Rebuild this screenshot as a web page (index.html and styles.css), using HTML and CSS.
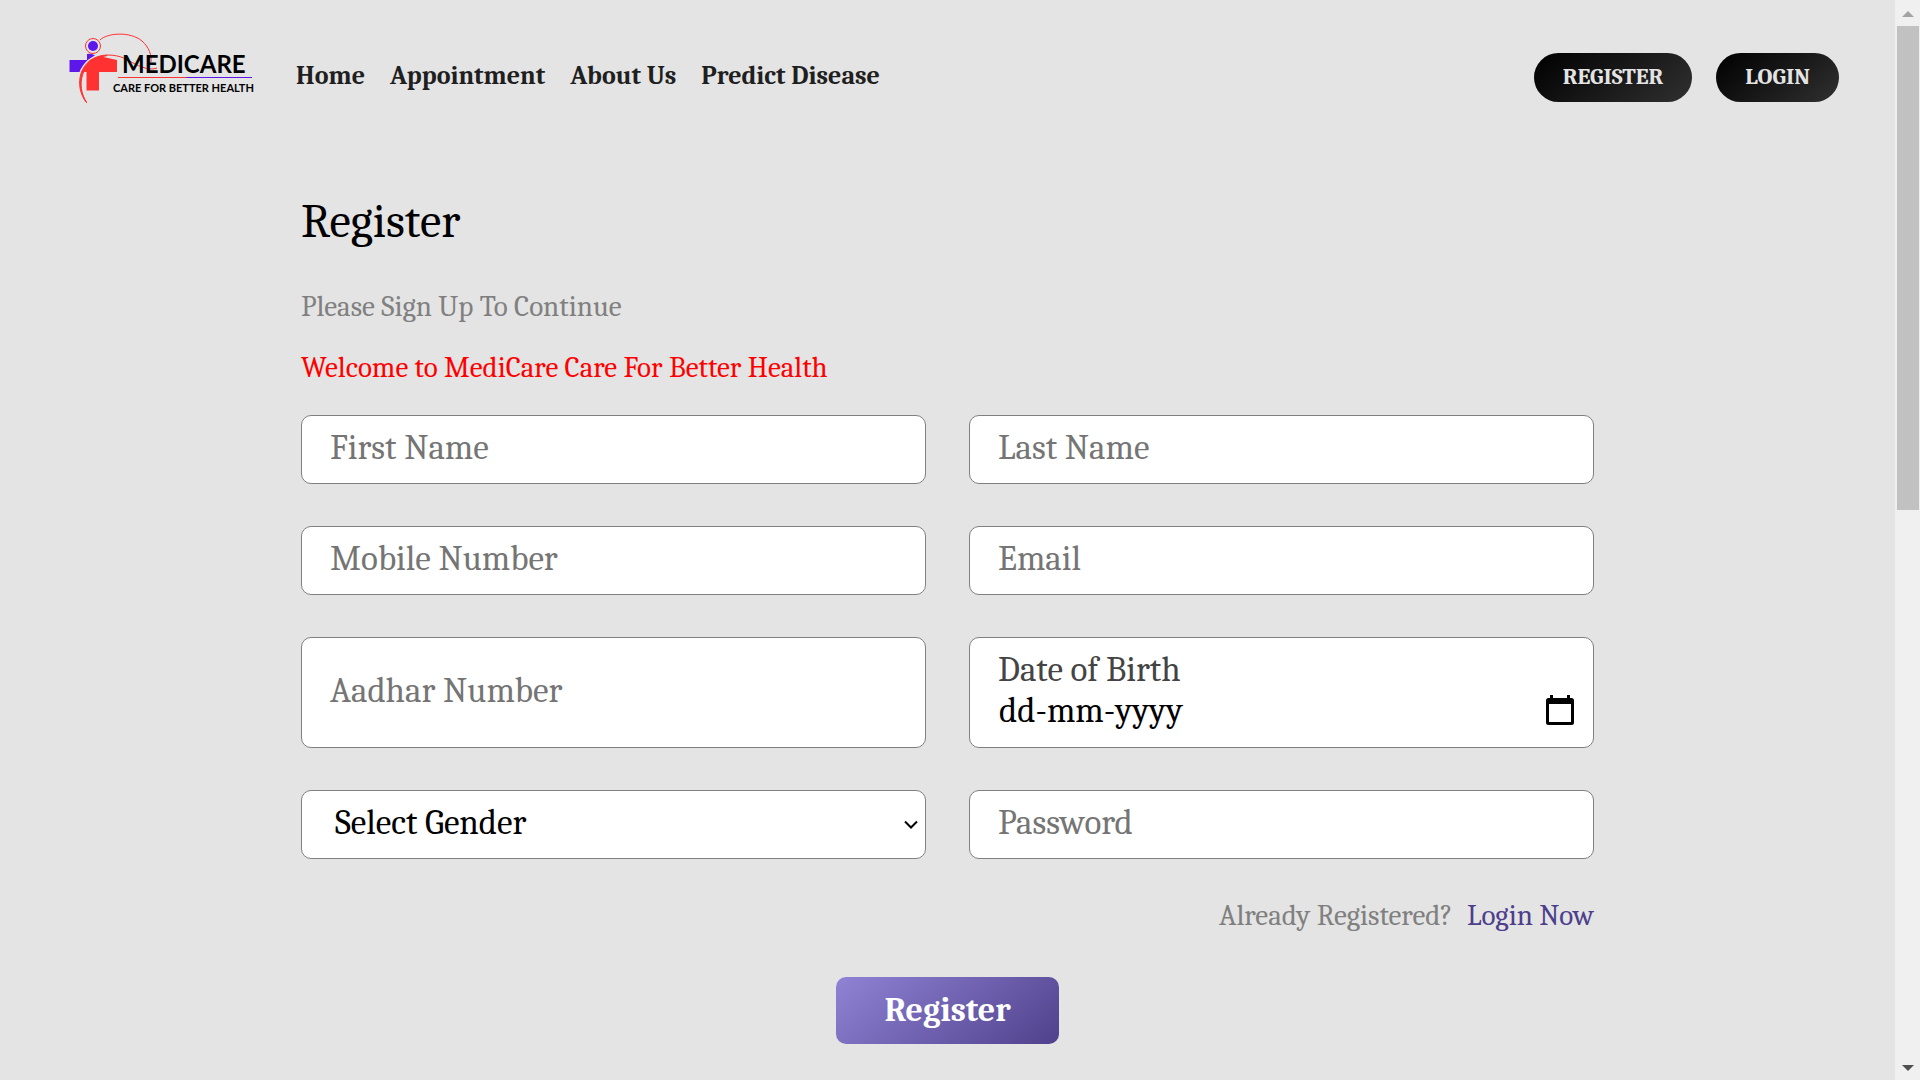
FILE: index.html
```html
<!DOCTYPE html>
<html lang="en">
<head>
<meta charset="utf-8">
<meta name="viewport" content="width=device-width, initial-scale=1">
<title>MediCare - Register</title>
<link rel="stylesheet" href="styles.css">
</head>
<body>
<div class="page">
  <header class="header">
    <a class="logo" href="#" aria-label="MediCare home">
      <svg width="188" height="72" viewBox="68 32 188 72" aria-hidden="true">
        <path d="M69.5 60H87V54q7-1 10 4v2h3v12H69.500z" fill="#5e17eb"/>
        <path d="M79 103C74 78 84 56 107 55c12 0 20 5 26 12" fill="none" stroke="#e4e4e4" stroke-width="4"/>
        <path d="M117 60V72H99V90.500H86.500V72H81L90 60l9-4z" fill="#ff3131"/>
        <path d="M86.500 102.500C73 86 79 56 107 55c15 0 20 5 28 9 10 5 17 6 22 4" fill="none" stroke="#ff3131" stroke-width="1"/>
        <path d="M86.500 102.500C76 86 80 60 107 55.500C82 57 73 82 86.500 102.500z" fill="#ff3131" stroke="#ff3131"/>
        <circle cx="93" cy="46" r="7.500" fill="#e4e4e4" stroke="#ff3131"/>
        <circle cx="93" cy="46" r="5" fill="#5e17eb"/>
        <path d="M100 40C107 33 130 31 142 41c7 6 10 15 9 21" fill="none" stroke="#ff3131" stroke-width="1"/>
        <text x="122" y="73" class="logo-name">MEDICARE</text>
        <path d="M118 77.500h68" stroke="#ff3131" stroke-width="1"/>
        <path d="M186 77.500h66" stroke="#5e17eb" stroke-width="1"/>
        <text x="113" y="92" class="logo-tag">CARE FOR BETTER HEALTH</text>
      </svg>
    </a>
    <nav class="nav">
      <a href="#">Home</a>
      <a href="#">Appointment</a>
      <a href="#">About Us</a>
      <a href="#">Predict Disease</a>
    </nav>
    <div class="actions">
      <button class="pill" type="button">REGISTER</button>
      <button class="pill" type="button">LOGIN</button>
    </div>
  </header>
  <main class="main">
    <h1>Register</h1>
    <p class="lead">Please Sign Up To Continue</p>
    <p class="lead welcome">Welcome to MediCare Care For Better Health</p>
    <form>
      <div class="fields">
        <input class="field" type="text" placeholder="First Name" aria-label="First Name">
        <input class="field" type="text" placeholder="Last Name" aria-label="Last Name">
        <input class="field" type="tel" placeholder="Mobile Number" aria-label="Mobile Number">
        <input class="field" type="email" placeholder="Email" aria-label="Email">
        <input class="field" type="text" placeholder="Aadhar Number" aria-label="Aadhar Number">
        <div class="field date">
          <label for="dob">Date of Birth</label>
          <div class="date-row">
            <input id="dob" type="text" placeholder="dd-mm-yyyy">
            <button class="picker" type="button" aria-label="Open calendar">
              <svg width="28" height="30" viewBox="0 0 28 30" aria-hidden="true">
                <path fill-rule="evenodd" d="M4 0h3v3h14V0h3v3h1.500a2.500 2.500 0 0 1 2.500 2.500v22a2.500 2.500 0 0 1-2.500 2.500h-23A2.500 2.500 0 0 1 0 27.500v-22A2.500 2.500 0 0 1 2.500 3H4zM3 9v18h22V9z"/>
              </svg>
            </button>
          </div>
        </div>
        <div class="select">
          <select class="field" aria-label="Gender">
            <option>Select Gender</option>
            <option>Male</option>
            <option>Female</option>
          </select>
          <svg class="chevron" width="14" height="10" viewBox="0 0 14 10" aria-hidden="true"><path d="M1 1.500l6 6 6-6" fill="none" stroke="#000" stroke-width="2"/></svg>
        </div>
        <input class="field" type="password" placeholder="Password" aria-label="Password">
      </div>
      <p class="signin">Already Registered? <a href="#">Login Now</a></p>
      <button class="submit" type="submit">Register</button>
    </form>
  </main>
</div>
<div class="scrollbar" aria-hidden="true">
  <svg width="12" height="6" viewBox="0 0 12 6"><path d="M0 6l6-6 6 6z" fill="#a3a3a3"/></svg>
  <div class="track"><div class="thumb"></div></div>
  <svg width="12" height="6" viewBox="0 0 12 6"><path d="M0 0h12L6 6z" fill="#505050"/></svg>
</div>
</body>
</html>
```
FILE: styles.css
```css
* { box-sizing: border-box; }
body {
  margin: 0;
  display: flex;
  min-height: 100vh;
  background: #e4e4e4;
  font-family: Caladea, Cambria, "Liberation Serif", serif;
}
input, select, button { font-family: inherit; }
.page { flex: 1; min-width: 0; }
.header {
  display: flex;
  align-items: center;
  padding: 32px 56px 0 68px;
}
.logo svg { display: block; }
.logo-name { font: 700 24px Lato, sans-serif; }
.logo-tag { font: 700 11px Lato, sans-serif; }
.nav { display: flex; gap: 25px; margin: 16px 0 0 40px; }
.nav a {
  color: #1f1f1f;
  font-size: 26px;
  font-weight: 600;
  line-height: 32px;
  text-decoration: none;
}
.actions { display: flex; gap: 24px; margin: 18px 0 0 auto; }
.pill {
  height: 49px;
  padding: 0 29px 2px;
  border: 0;
  border-radius: 25px;
  background: linear-gradient(140deg, #000, #303030);
  color: #e4e4e4;
  font-size: 23px;
  font-weight: 700;
}
.main { width: 100%; max-width: 1293px; margin: 0 auto; padding: 88px 0 36px; }
h1 { margin: 0; font-size: 48px; font-weight: 500; line-height: 60px; }
.lead { margin: 25px 0 0; color: #808080; font-size: 29px; line-height: 36px; }
h1 + .lead { margin-top: 37px; }
.lead.welcome { color: #f00; }
.fields {
  display: grid;
  grid-template-columns: 1fr 1fr;
  gap: 42px 43px;
  margin-top: 29px;
}
.field {
  width: 100%;
  min-height: 69px;
  padding: 0 28px 4px;
  border: 1px solid #808080;
  border-radius: 10px;
  background: #fff;
  color: #000;
  font-size: 35px;
  line-height: 40px;
}
.field::placeholder { color: #757575; }
.date { padding: 12px 19px 17px 28px; }
.date label { display: block; color: #444; }
.date-row { display: flex; align-items: center; }
.date input { flex: 1; min-width: 0; height: 40px; padding: 0 1px; border: 0; background: none; font-size: 35px; }
.date input::placeholder { color: #000; }
.picker { padding: 0; border: 0; background: none; }
.picker svg { display: block; }
.select { position: relative; }
.select select { display: block; appearance: none; padding-left: 33px; }
.chevron { position: absolute; right: 8px; top: 30px; pointer-events: none; }
.signin { margin: 39px 0 0; color: #808080; font-size: 29px; line-height: 36px; text-align: right; }
.signin a { margin-left: 8px; color: #4d3f8c; text-decoration: none; }
.submit {
  display: block;
  height: 67px;
  margin: 43px auto 0;
  padding: 0 48px 2px;
  border: 0;
  border-radius: 10px;
  background: linear-gradient(140deg, #9083d5, #4f418b);
  color: #fff;
  font-size: 34px;
  font-weight: 700;
}
.scrollbar {
  position: sticky;
  top: 0;
  display: flex;
  flex-direction: column;
  align-items: center;
  width: 25px;
  height: 100vh;
  padding: 11px 1px 9px 2px;
  background: #f0f0f0;
}
.track { flex: 1; width: 100%; padding: 9px 0; }
.thumb { height: 47%; background: #c1c1c1; }
```
